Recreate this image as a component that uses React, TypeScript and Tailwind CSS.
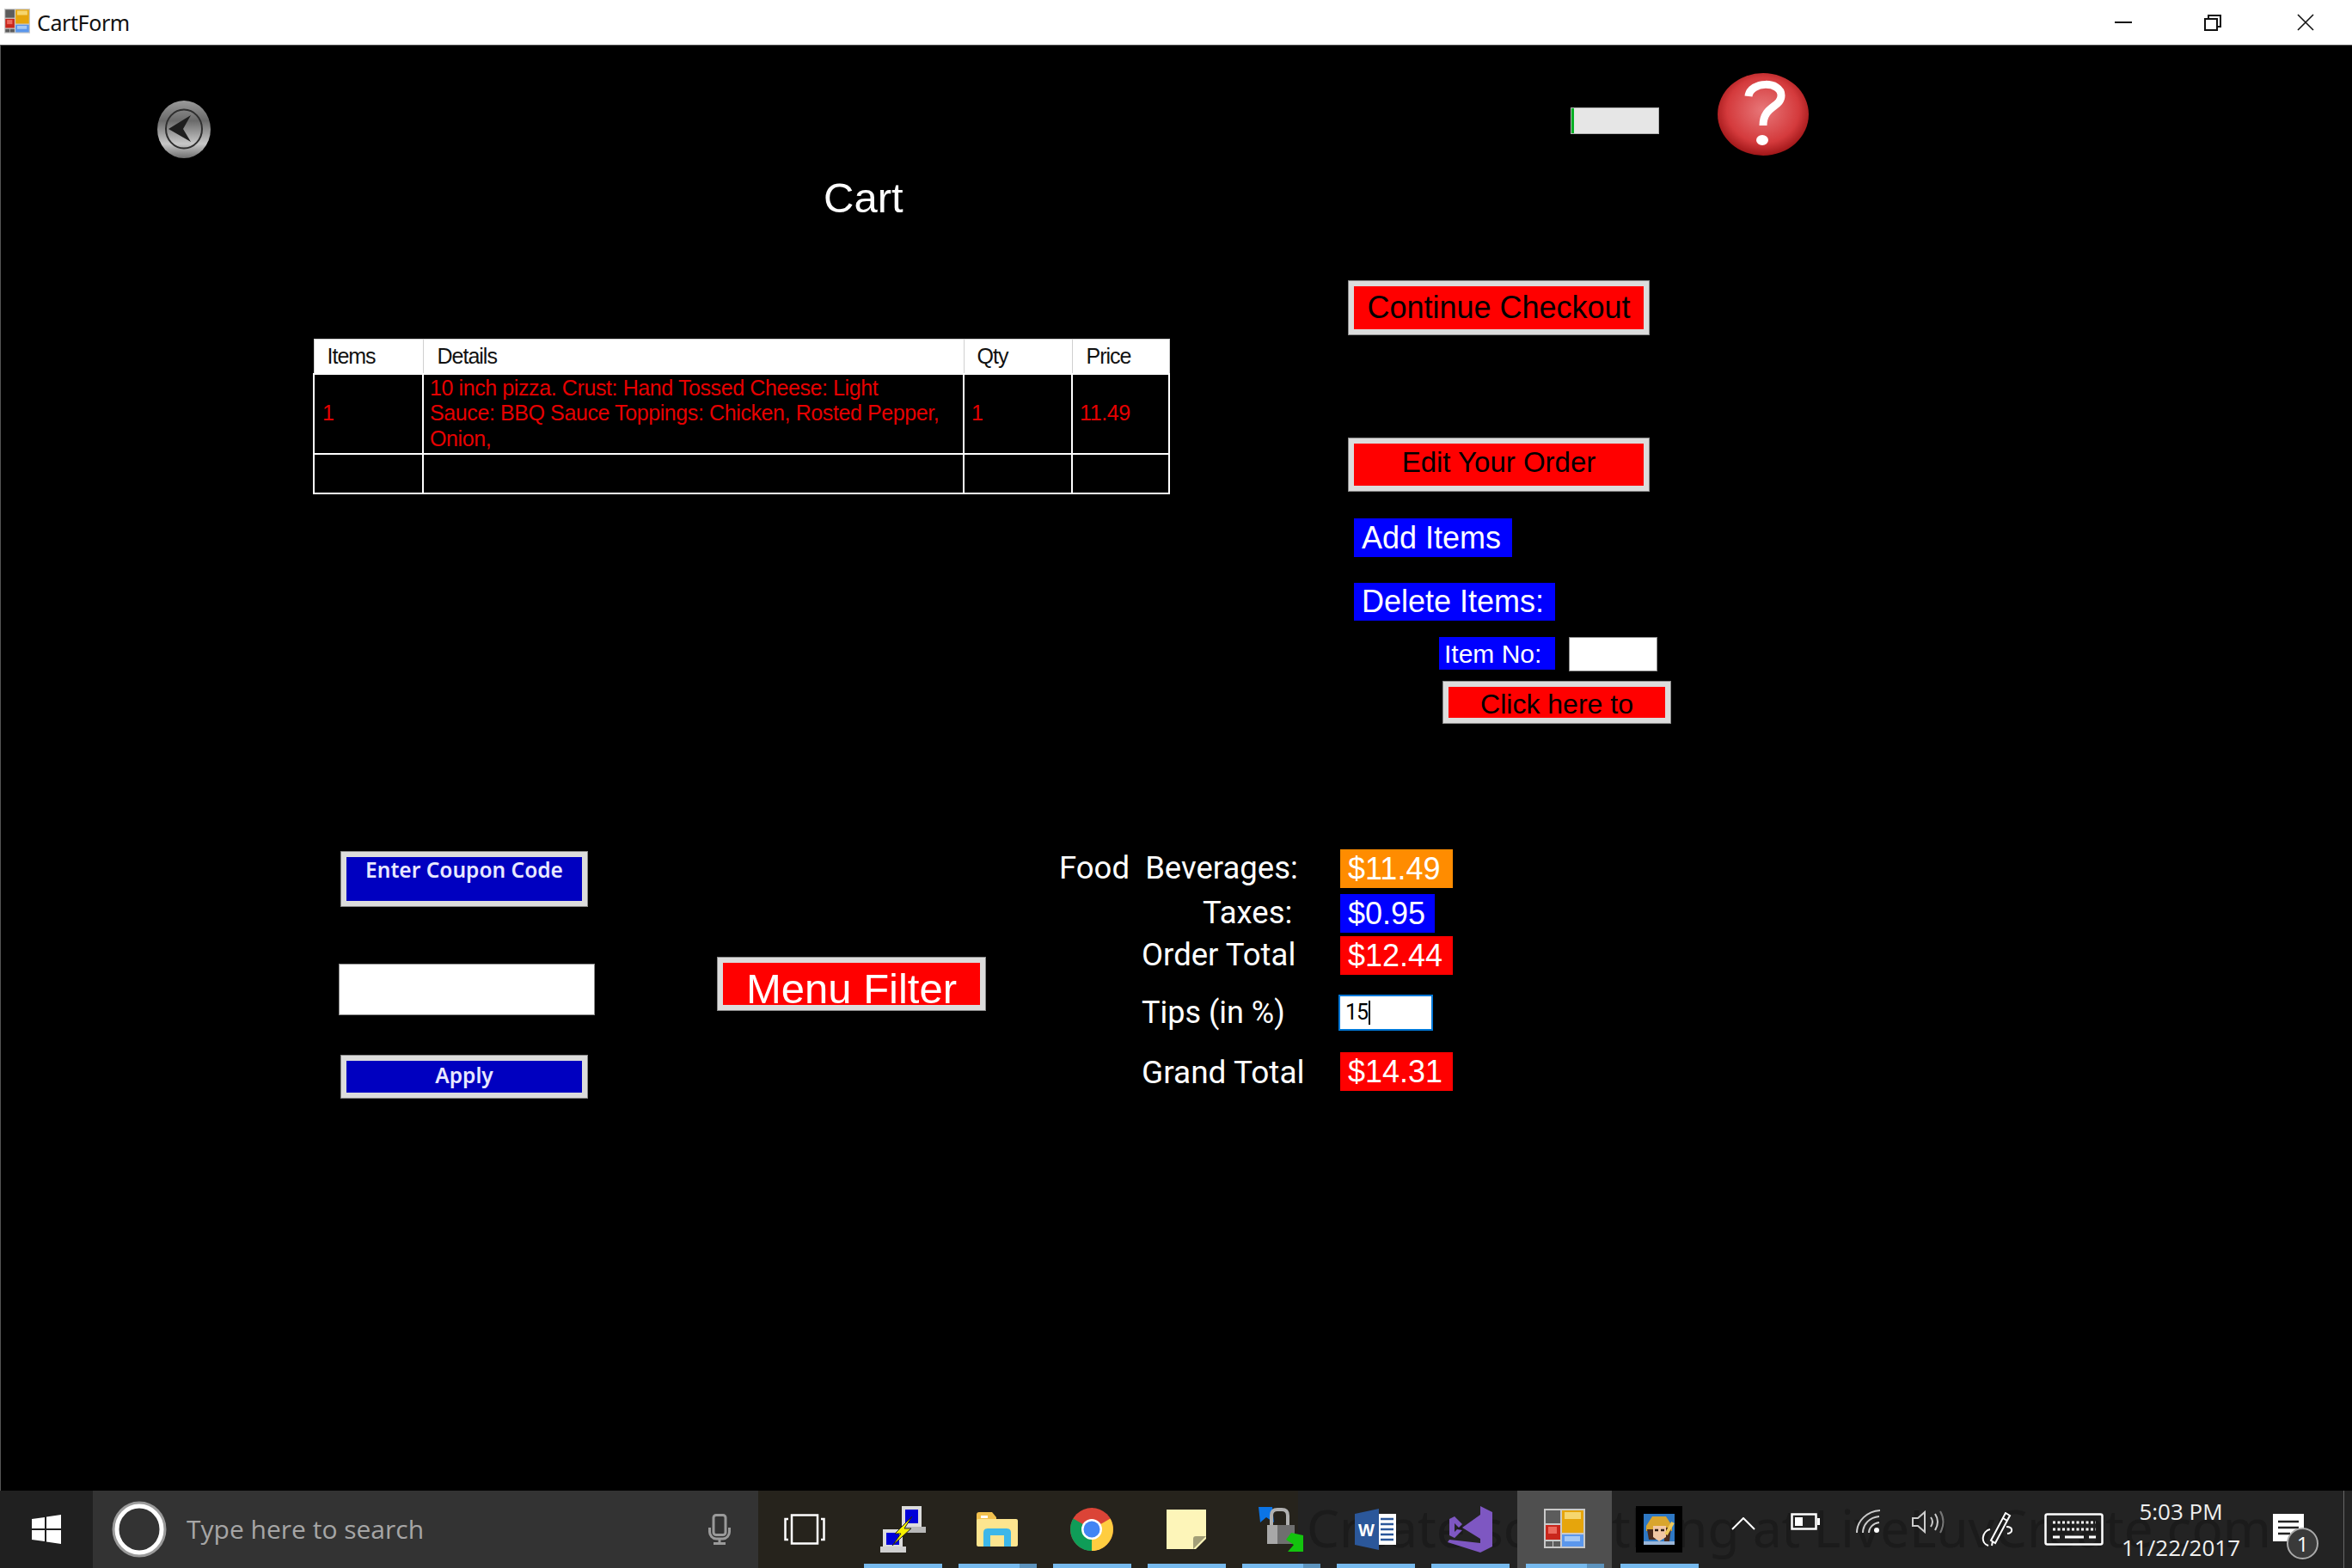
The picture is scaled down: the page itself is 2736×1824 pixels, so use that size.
import { ReactNode } from "react";

const AppIcon = ({ size }: { size: number }) => (
  <svg width={size} height={size} viewBox="0 0 48 48">
    <rect x="0" y="0" width="48" height="46" fill="#c9c9c9" />
    <rect x="2" y="2" width="17" height="15" fill="#5c5c5c" />
    <rect x="21" y="2" width="25" height="26" fill="#e6a50c" />
    <rect x="24" y="4" width="19" height="8" fill="#f6d66e" />
    <rect x="2" y="19" width="17" height="17" fill="#c9261c" />
    <rect x="5" y="21" width="10" height="8" fill="#ec6a5e" />
    <rect x="21" y="30" width="25" height="14" fill="#5b97ec" />
    <rect x="24" y="32" width="18" height="6" fill="#a4c8f5" />
    <rect x="2" y="38" width="8" height="6" fill="#5c5c5c" />
    <rect x="11" y="38" width="8" height="6" fill="#5c5c5c" />
  </svg>
);

const BackButton = () => (
  <svg width="62" height="67" viewBox="0 0 62 67" className="shrink-0">
    <defs>
      <linearGradient id="backFill" x1="0" y1="0" x2="0" y2="1">
        <stop offset="0%" stopColor="#9a9a9a" />
        <stop offset="35%" stopColor="#6a6a6a" />
        <stop offset="75%" stopColor="#c8c8c8" />
        <stop offset="100%" stopColor="#6e6e6e" />
      </linearGradient>
    </defs>
    <ellipse cx="31" cy="33.5" rx="31" ry="33.5" fill="url(#backFill)" />
    <ellipse cx="31" cy="33" rx="21" ry="22.5" fill="none" stroke="#2e2e2e" strokeWidth="2" />
    <path d="M13 33 L39 17 L30 33 L39 48 Z" fill="#1e1e1e" />
  </svg>
);

const HelpButton = () => (
  <svg width="106" height="96" viewBox="0 0 106 96" className="shrink-0">
    <defs>
      <radialGradient id="helpFill" cx="50%" cy="45%" r="55%">
        <stop offset="0%" stopColor="#e8787a" />
        <stop offset="72%" stopColor="#d43a3c" />
        <stop offset="100%" stopColor="#a01618" />
      </radialGradient>
    </defs>
    <ellipse cx="53" cy="48" rx="53" ry="48" fill="url(#helpFill)" />
    <path d="M36 27 C38 9 74 9 74 26 C74 40 53 38 53 61" fill="none" stroke="#fff" strokeWidth="9" />
    <ellipse cx="52" cy="78" rx="7" ry="6" fill="#fff" />
  </svg>
);

const FormButton = ({ children, className }: { children: ReactNode; className: string }) => (
  <button className={`block border-[7px] border-[#dcdcdc] outline-1 outline-[#8a8a8a] -outline-offset-1 font-['Liberation_Sans',sans-serif] whitespace-nowrap ${className}`}>
    {children}
  </button>
);

const TextBox = ({ className, children }: { className: string; children?: ReactNode }) => (
  <div className={`bg-white border border-[#8c8c8c] ${className}`}>{children}</div>
);

const summary = [
  { label: "Food  Beverages:", pad: "pl-0", value: "$11.49", box: "bg-[#ff8c00] w-[131px]", top: "mt-0" },
  { label: "Taxes:", pad: "pl-[167px]", value: "$0.95", box: "bg-[#0000ff] w-[110px]", top: "mt-[7px]" },
  { label: "Order Total", pad: "pl-[96px]", value: "$12.44", box: "bg-[#ff0000] w-[131px]", top: "mt-[4px]" },
];

const Slot = ({ children, mark, active }: { children: ReactNode; mark?: "single" | "stack"; active?: boolean }) => (
  <div className={`relative w-[110px] h-full flex items-center justify-center ${active ? "bg-[#4f4f4f]" : ""}`}>
    {children}
    {mark && (
      <div className="absolute bottom-0 left-[10px] w-[91px] h-[5px] flex">
        <div className="flex-1 bg-[#76b9ed]" />
        {mark === "stack" && <div className="w-[20px] bg-[#5d93bd]" />}
      </div>
    )}
  </div>
);

export default function App() {
  return (
    <div className="w-[2736px] h-[1824px] overflow-hidden flex flex-col bg-black">
      {/* title bar */}
      <div className="h-[53px] shrink-0 bg-white border-b border-[#555] flex items-center">
        <div className="ml-[5px] -mt-[2px]">
          <AppIcon size={30} />
        </div>
        <span className="ml-[8px] font-['Noto_Sans',sans-serif] text-[25px] leading-none text-[#111] tracking-[-0.4px]">CartForm</span>
        <div className="ml-auto flex items-center">
          <svg width="20" height="20" viewBox="0 0 20 20" className="mr-[84px]">
            <rect x="0" y="9" width="20" height="2" fill="#111" />
          </svg>
          <svg width="20" height="20" viewBox="0 0 20 20" className="mr-[88px]">
            <path d="M5 5 V2 H19 V15 H15 M1 6 H15 V19 H1 Z" fill="none" stroke="#111" strokeWidth="2" />
          </svg>
          <svg width="20" height="20" viewBox="0 0 20 20" className="mr-[44px]">
            <path d="M1 1 L19 19 M19 1 L1 19" fill="none" stroke="#111" strokeWidth="1.6" />
          </svg>
        </div>
      </div>

      {/* form */}
      <div className="flex-1 border-l border-[#555] min-h-0 text-white">
        <div className="flex items-start pt-[32px]">
          <div className="ml-[182px] mt-[32px]">
            <BackButton />
          </div>
          <div className="ml-[1582px] mt-[40px] w-[103px] h-[31px] bg-[#e6e6e6] border border-[#b4b4b4]">
            <div className="w-[3px] h-full bg-[#06b025]" />
          </div>
          <div className="ml-[68px]">
            <HelpButton />
          </div>
        </div>

        <div className="mt-[18px] ml-[957px] h-[56px] font-['Liberation_Sans',sans-serif] text-[49px] leading-[56px]">Cart</div>

        <div className="flex items-start mt-[68px]">
          <table className="ml-[363px] mt-[68px] w-[995px] table-fixed border-collapse font-['Liberation_Sans',sans-serif] text-[25px] tracking-[-1px] leading-[29.5px]">
            <colgroup>
              <col className="w-[127px]" />
              <col className="w-[629px]" />
              <col className="w-[126px]" />
              <col className="w-[113px]" />
            </colgroup>
            <thead>
              <tr className="h-[40px] bg-white text-[#111] text-left">
                <th className="font-normal border border-[#d0d0d0] pl-[15px]">Items</th>
                <th className="font-normal border border-[#d0d0d0] pl-[16px]">Details</th>
                <th className="font-normal border border-[#d0d0d0] pl-[15px]">Qty</th>
                <th className="font-normal border border-[#d0d0d0] pl-[16px]">Price</th>
              </tr>
            </thead>
            <tbody className="text-[#e60000] tracking-[-0.4px]">
              <tr className="h-[93px]">
                <td className="border-2 border-white pl-[9px]">1</td>
                <td className="border-2 border-white pl-[7px] pr-[2px]">
                  10 inch pizza. Crust: Hand Tossed Cheese: Light
                  <br />
                  Sauce: BBQ Sauce Toppings: Chicken, Rosted Pepper,
                  <br />
                  Onion,
                </td>
                <td className="border-2 border-white pl-[8px]">1</td>
                <td className="border-2 border-white pl-[8px]">11.49</td>
              </tr>
              <tr className="h-[46px]">
                <td className="border-2 border-white" />
                <td className="border-2 border-white" />
                <td className="border-2 border-white" />
                <td className="border-2 border-white" />
              </tr>
            </tbody>
          </table>

          <div className="ml-[207px] flex flex-col items-start">
            <FormButton className="w-[351px] h-[64px] bg-[#ff0000] text-black text-[36px] leading-none">Continue Checkout</FormButton>
            <FormButton className="mt-[119px] w-[351px] h-[63px] bg-[#ff0000] text-black text-[33px] leading-none pb-[6px]">Edit Your Order</FormButton>
            <div className="mt-[31px] ml-[7px] w-[184px] h-[45px] pl-[9px] flex items-center bg-[#0000ff] font-['Liberation_Sans',sans-serif] text-[36px]">Add Items</div>
            <div className="mt-[30px] ml-[7px] w-[234px] h-[44px] pl-[9px] flex items-center bg-[#0000ff] font-['Liberation_Sans',sans-serif] text-[36px]">Delete Items:</div>
            <div className="mt-[19px] ml-[106px] flex items-start">
              <div className="w-[135px] h-[38px] pl-[6px] flex items-center bg-[#0000ff] font-['Liberation_Sans',sans-serif] text-[30px]">Item No:</div>
              <TextBox className="ml-[16px] w-[103px] h-[40px]" />
            </div>
            <FormButton className="mt-[11px] ml-[110px] w-[266px] h-[50px] bg-[#ff0000] text-black text-[32px] leading-none pt-[4px]">Click here to</FormButton>
          </div>
        </div>

        <div className="flex items-start mt-[146px]">
          <div className="ml-[393px] flex flex-col items-start">
            <FormButton className="mt-[2px] ml-[2px] w-[288px] h-[65px] bg-[#0000c0] text-[#e8e8ff] !font-['Noto_Sans',sans-serif] font-semibold text-[24.5px] leading-none pb-[20px]">Enter Coupon Code</FormButton>
            <TextBox className="mt-[66px] w-[298px] h-[60px]" />
            <FormButton className="mt-[46px] ml-[2px] w-[288px] h-[51px] bg-[#0000c0] text-[#e8e8ff] !font-['Noto_Sans',sans-serif] font-semibold text-[24.5px] leading-none pb-[2px]">Apply</FormButton>
          </div>

          <FormButton className="ml-[142px] mt-[125px] w-[313px] h-[63px] bg-[#ff0000] text-white text-[49px] leading-none pt-[6px]">Menu Filter</FormButton>

          <div className="ml-[85px] flex flex-col">
            {summary.map((row) => (
              <div key={row.label} className={`flex items-center ${row.top}`}>
                <div className={`w-[327px] whitespace-pre font-[Roboto,sans-serif] text-[36.5px] leading-none ${row.pad}`}>{row.label}</div>
                <div className={`h-[45px] pl-[9px] flex items-center font-['Liberation_Sans',sans-serif] text-[36px] ${row.box}`}>{row.value}</div>
              </div>
            ))}
            <div className="flex items-center mt-[23px]">
              <div className="w-[325px] pl-[96px] font-[Roboto,sans-serif] text-[36px] leading-none">Tips (in %)</div>
              <div className="w-[110px] h-[42px] pl-[6px] flex items-center bg-white border-2 border-[#0078d7] font-[Roboto,sans-serif] text-[25px] text-black tracking-[-1px]">
                15<span className="ml-[1px] w-[2px] h-[28px] bg-black" />
              </div>
            </div>
            <div className="flex items-center mt-[25px]">
              <div className="w-[327px] pl-[96px] pt-[2px] font-[Roboto,sans-serif] text-[37px] leading-none">Grand Total</div>
              <div className="w-[131px] h-[45px] pl-[9px] flex items-center bg-[#ff0000] font-['Liberation_Sans',sans-serif] text-[36px]">$14.31</div>
            </div>
          </div>
        </div>
      </div>

      {/* taskbar */}
      <div className="relative h-[90px] shrink-0 bg-[#26231c] flex items-center overflow-hidden">
        <div className="absolute left-[1510px] right-0 top-0 bottom-0 bg-[#232323] pl-[10px] font-['Noto_Sans',sans-serif] text-[60px] leading-[86px] text-[#1b1b1b] whitespace-nowrap">
          Create something at LiveLuvCreate.com
        </div>

        <div className="relative w-[108px] h-full bg-[#202020] flex items-center justify-center">
          <svg width="34" height="34" viewBox="0 0 34 34">
            <path d="M0 5 L15 3 V16 H0 Z M17 2.5 L34 0 V16 H17 Z M0 18 H15 V31 L0 29 Z M17 18 H34 V34 L17 31.5 Z" fill="#fff" />
          </svg>
        </div>

        <div className="relative w-[774px] h-full bg-[#333333] flex items-center">
          <svg width="64" height="66" viewBox="0 0 64 66" className="ml-[22px]">
            <ellipse cx="32" cy="33" rx="29" ry="30" fill="none" stroke="#9a9a9a" strokeWidth="5" />
            <ellipse cx="32" cy="33" rx="26" ry="27" fill="none" stroke="#fff" strokeWidth="5" />
          </svg>
          <span className="ml-[23px] font-['Open_Sans',sans-serif] text-[30px] leading-none text-[#a6a6a6]">Type here to search</span>
          <svg width="26" height="36" viewBox="0 0 26 36" className="ml-auto mr-[32px]" fill="none" stroke="#9a9a9a" strokeWidth="3">
            <rect x="6" y="1.5" width="14" height="23" rx="3" />
            <path d="M1.5 16 V21 A8 8 0 0 0 9 29 H17 A8 8 0 0 0 24.5 21 V16 M13 29 V34 M6 34.5 H20" />
          </svg>
        </div>

        <div className="relative w-[113px] h-full flex items-center pl-[30px]">
          <svg width="48" height="36" viewBox="0 0 48 36" fill="none" stroke="#fff" strokeWidth="2.5">
            <rect x="9" y="1.5" width="30" height="33" />
            <path d="M5 6 H1.5 V30 H5 M43 6 H46.5 V30 H43" />
          </svg>
        </div>

        <Slot mark="single">
          <svg width="54" height="54" viewBox="0 0 54 54">
            <rect x="26" y="0" width="23" height="24" fill="#dcdcdc" />
            <rect x="30" y="4" width="15" height="16" fill="#0000d8" />
            <rect x="26" y="24" width="28" height="7" fill="#b8b8b8" />
            <rect x="4" y="27" width="23" height="22" fill="#dcdcdc" />
            <rect x="8" y="31" width="15" height="14" fill="#0000d8" />
            <rect x="1" y="47" width="30" height="7" fill="#d0d0d0" />
            <path d="M38 12 L18 32 L25 32 L15 46 L37 26 L29 26 Z" fill="#f6f000" stroke="#222" strokeWidth="1" />
          </svg>
        </Slot>
        <Slot mark="stack">
          <svg width="48" height="40" viewBox="0 0 48 40">
            <path d="M0 3 Q0 0 3 0 H18 L23 6 V36 H0 Z" fill="#f2c14e" />
            <rect x="0" y="8" width="48" height="32" rx="2" fill="#fde58f" />
            <rect x="5" y="4" width="8" height="3" fill="#fff" />
            <path d="M8 40 V24 Q8 19 13 19 H35 Q40 19 40 24 V40 H32 V27 H16 V40 Z" fill="#3db7e9" />
          </svg>
        </Slot>
        <Slot mark="single">
          <svg width="50" height="50" viewBox="0 0 50 50">
            <circle cx="25" cy="25" r="25" fill="#db4437" />
            <path d="M25 25 L3.4 12.5 A25 25 0 0 0 25 50 Z" fill="#0f9d58" />
            <path d="M25 25 L25 50 A25 25 0 0 0 46.6 12.5 Z" fill="#ffcd40" />
            <circle cx="25" cy="25" r="12" fill="#fff" />
            <circle cx="25" cy="25" r="9.5" fill="#4285f4" />
          </svg>
        </Slot>
        <Slot mark="single">
          <svg width="46" height="46" viewBox="0 0 46 46">
            <path d="M0 0 H46 V34 L34 46 H0 Z" fill="#fdf5b9" />
            <path d="M46 31 L31 46 V34 Q31 31 34 31 Z" fill="#a39f78" />
          </svg>
        </Slot>
        <Slot mark="stack">
          <svg width="52" height="52" viewBox="0 0 52 52">
            <path d="M0 0 H16 L18 18 L9 12 L2 18 Z" fill="#0b74e5" />
            <path d="M15 24 V10 Q15 3 22 3 H27 Q34 3 34 10 V24" fill="none" stroke="#b0b0b0" strokeWidth="4" />
            <rect x="10" y="21" width="32" height="22" fill="#6f6f6f" />
            <rect x="10" y="21" width="12" height="22" fill="#a8a8a8" />
            <path d="M38 30 L52 33 V52 H34 L41 44 L32 38 Z" fill="#13c40e" />
          </svg>
        </Slot>
        <Slot mark="single">
          <svg width="48" height="48" viewBox="0 0 48 48">
            <path d="M0 6 L28 0 V48 L0 42 Z" fill="#2b579a" />
            <rect x="28" y="6" width="20" height="36" fill="#fff" />
            <path d="M30 12 H45 M30 18 H45 M30 24 H45 M30 30 H45 M30 36 H45" stroke="#2b579a" strokeWidth="2.5" />
            <text x="4" y="32" fontFamily="Liberation Sans, sans-serif" fontSize="20" fontWeight="700" fill="#fff">W</text>
          </svg>
        </Slot>
        <Slot mark="single">
          <svg width="52" height="54" viewBox="0 0 52 54">
            <path d="M38 0 L52 7 V47 L38 54 L0 42 L2 39 L38 43 Z" fill="#7e57c2" />
            <path fillRule="evenodd" d="M38 10 V38 L17 25 Z M2 15 L8 12 L17 21 L11 27 L2 20 Z M2 20 V34 L8 37 L17 28 L11 27 Z M8 20 V30 L13 25 Z" fill="#7e57c2" />
          </svg>
        </Slot>
        <Slot mark="stack" active>
          <AppIcon size={48} />
        </Slot>
        <Slot mark="single">
          <div className="w-[54px] h-[54px] bg-black flex items-center justify-center">
            <svg width="36" height="36" viewBox="0 0 36 36">
              <rect width="36" height="36" fill="#2e78c4" />
              <path d="M3 14 L10 3 H26 L33 14 V20 H3 Z" fill="#d9a52e" />
              <path d="M4 18 H14 V30 H6 Z M24 16 H32 L30 32 H24 Z" fill="#4a2a1c" />
              <path d="M11 14 H26 V27 L18 32 L11 27 Z" fill="#f2c7a4" />
              <path d="M13 19 H17 M20 19 H24" stroke="#2c1a12" strokeWidth="2.5" />
              <path d="M26 24 L34 10" stroke="#efc85a" strokeWidth="4" />
              <rect y="32" width="36" height="4" fill="#9bb6d8" />
            </svg>
          </div>
        </Slot>

        {/* tray */}
        <div className="relative flex items-center h-full text-white">
          <svg width="28" height="15" viewBox="0 0 28 15" className="ml-[29px] -mt-[14px]" fill="none" stroke="#fff" strokeWidth="2">
            <path d="M1 14 L14 1 L27 14" />
          </svg>
          <svg width="34" height="20" viewBox="0 0 34 20" className="ml-[41px] -mt-[18px]">
            <rect x="1.5" y="1.5" width="28" height="17" fill="none" stroke="#fff" strokeWidth="2.5" />
            <rect x="5" y="5" width="9" height="10" fill="#fff" />
            <rect x="31" y="6" width="3" height="8" fill="#fff" />
          </svg>
          <svg width="30" height="28" viewBox="0 0 30 28" className="ml-[42px] -mt-[18px]" fill="none" stroke="#ccc" strokeWidth="2">
            <path d="M1 27 C1 13 13 2 28 1 M8 27 C8 17 16 9 27 8 M15 27 C15 21 20 16 27 15" />
            <circle cx="24" cy="24" r="3" fill="#fff" stroke="none" />
          </svg>
          <svg width="38" height="27" viewBox="0 0 38 27" className="ml-[35px] -mt-[18px]" fill="none" stroke="#ccc" strokeWidth="2">
            <path d="M1 9 H7 L15 2 V25 L7 18 H1 Z" />
            <path d="M22 8 Q26 13 22 19 M27 4 Q33 13 27 23" />
            <path d="M33 1 Q40 13 33 26" stroke="#777" />
          </svg>
          <svg width="40" height="40" viewBox="0 0 40 40" className="ml-[42px]" fill="none" stroke="#fff" strokeWidth="2">
            <path d="M29 1 L34 4 L17 36 L12 33 Z M26 7 L31 10 M14 34 L13 39" />
            <path d="M11 20 C2 22 -1 36 9 39 M30 17 C38 17 38 24 31 25" />
          </svg>
          <svg width="69" height="38" viewBox="0 0 69 38" className="ml-[34px]" fill="none">
            <rect x="1.5" y="1.5" width="66" height="35" rx="2" stroke="#fff" strokeWidth="2.5" />
            <path d="M10 11 H60" stroke="#fff" strokeWidth="3" strokeDasharray="3 2.5" />
            <path d="M10 19 H60" stroke="#fff" strokeWidth="3" strokeDasharray="3 2.5" />
            <path d="M10 28 H18 M24 28 H46 M52 28 H60" stroke="#fff" strokeWidth="3" />
          </svg>
          <div className="ml-[15px] w-[150px] text-center font-['Open_Sans',sans-serif] text-[26px] leading-[42px] text-[#f0f0f0]">
            <div>5:03 PM</div>
            <div>11/22/2017</div>
          </div>
          <div className="relative ml-[32px] w-[53px] h-[52px] mt-[16px]">
            <svg width="36" height="32" viewBox="0 0 36 32" className="absolute left-0 top-0">
              <rect width="36" height="32" fill="#fff" />
              <path d="M6 9 H30 M6 16 H30 M6 23 H20" stroke="#232323" strokeWidth="2.5" />
            </svg>
            <div className="absolute left-[16px] top-[16px] w-[37px] h-[37px] rounded-full bg-[#3a3a3a] border-2 border-[#aaa] flex items-center justify-center font-['Open_Sans',sans-serif] text-[24px] leading-none">1</div>
          </div>
          <div className="ml-[29px] w-px h-full bg-[#666]" />
        </div>
      </div>
    </div>
  );
}
